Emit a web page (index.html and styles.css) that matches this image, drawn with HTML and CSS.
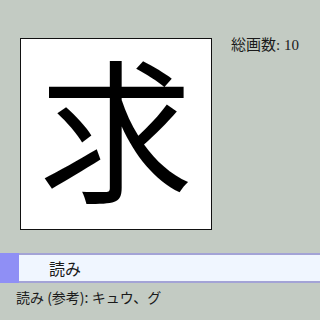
FILE: index.html
```html
<!DOCTYPE html>
<html lang="ja">
<head>
  <meta charset="UTF-8" />
  <title>求</title>
  <link rel="stylesheet" href="styles.css">
</head>
<body>
  <div class="top">
    <div class="kanji-box"><span class="kanji">求</span></div>
    <div class="strokes">総画数<span class="num">: 10</span></div>
  </div>

  <div class="bar">
    <div class="bar-mark"></div>
    <div class="bar-title">読み</div>
  </div>

  <div class="reading">読み (参考): キュウ、グ</div>
</body>
</html>
```

FILE: styles.css
```css
body {
  margin: 0;
  background: #c3cbc3;
  font-family: "Noto Sans CJK JP", sans-serif;
  color: #1a1a1a;
  width: 320px;
  height: 320px;
  overflow: hidden;
}
.top {
  display: flex;
  padding: 38px 0 0 20px;
}
.kanji-box {
  width: 190px;
  height: 190px;
  background: #fff;
  border: 1px solid #111;
  display: flex;
  align-items: center;
  justify-content: center;
}
.kanji {
  font-family: "Noto Sans CJK JP", sans-serif;
  font-size: 154px;
  line-height: 1;
  color: #000;
  margin-top: -20px;
}
.strokes {
  margin-left: 19px;
  font-size: 15px;
  line-height: 18px;
  margin-top: -3px;
}
.num {
  font-family: "Liberation Serif", serif;
  font-size: 15px;
}
.bar {
  display: flex;
  margin-top: 23px;
  height: 30px;
}
.bar-mark {
  width: 19px;
  background: #8f8ff5;
}
.bar-title {
  flex: 1;
  background: #f0f6ff;
  border-top: 2px solid #a3a3d6;
  border-bottom: 2px solid #a3a3d6;
  padding-left: 30px;
  font-size: 16px;
  line-height: 26px;
}
.reading {
  padding: 4px 0 0 16px;
  font-size: 14px;
  line-height: 20px;
}
```
